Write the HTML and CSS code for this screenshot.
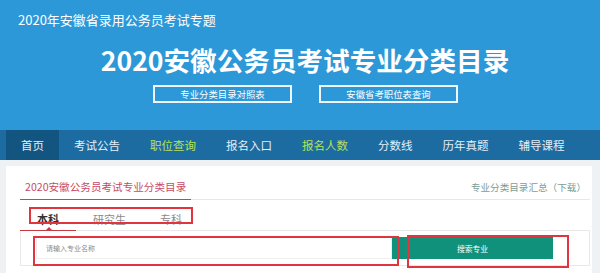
FILE: index.html
```html
<html>

<head>
  <meta charset="utf-8">
  <link rel="stylesheet" href="styles.css">
</head>

<body>
  <div id="banner">
    <div class="topic">2020年安徽省录用公务员考试专题</div>
    <h1>2020安徽公务员考试专业分类目录</h1>
    <div class="links">
      <a href="#">专业分类目录对照表</a>
      <a href="#">安徽省考职位表查询</a>
    </div>
  </div>
  <div id="nav">
    <a href="#" class="active">首页</a>
    <a href="#">考试公告</a>
    <a href="#" class="hot">职位查询</a>
    <a href="#">报名入口</a>
    <a href="#" class="hot">报名人数</a>
    <a href="#">分数线</a>
    <a href="#">历年真题</a>
    <a href="#">辅导课程</a>
  </div>
  <div id="card">
    <div class="card-head">
      <h2>2020安徽公务员考试专业分类目录</h2>
      <a href="#">专业分类目录汇总（下载）</a>
    </div>
    <div class="tabs">
      <span class="tab current">本科</span>
      <span class="tab">研究生</span>
      <span class="tab">专科</span>
    </div>
    <div class="search">
      <div class="field">请输入专业名称</div>
      <button>搜索专业</button>
    </div>
    <!-- marks drawn over the screenshot -->
    <div class="mark mark-tabs"></div>
    <div class="mark mark-input"></div>
    <div class="mark mark-btn"></div>
  </div>
</body>

</html>
```

FILE: styles.css
```css
body {
  margin: 0;
  padding: 0;
  background: #eff2f5;
  font-family: "Noto Sans CJK SC", "Noto Sans", sans-serif;
  overflow: hidden;
}

a {
  text-decoration: none;
}

#banner {
  background: #2d98d8;
  height: 130px;
  color: #fff;
  overflow: hidden;
}

#banner .topic {
  font-size: 13px;
  line-height: 16px;
  padding: 12px 0 0 18px;
}

#banner h1 {
  margin: 16px 0 0 0;
  padding-left: 10px;
  font-size: 26.6px;
  line-height: 32px;
  font-weight: bold;
  text-align: center;
}

#banner .links {
  display: flex;
  justify-content: center;
  gap: 27px;
  margin-top: 9px;
  padding-left: 11px;
}

#banner .links a {
  box-sizing: border-box;
  width: 139px;
  height: 18px;
  border: solid 2px #eef6fc;
  color: #fff;
  font-size: 9.4px;
  line-height: 14px;
  text-align: center;
}

#nav {
  display: flex;
  background: #1c6ca2;
  height: 30px;
  padding-left: 6px;
}

#nav a {
  padding: 0 15px;
  line-height: 30px;
  font-size: 11.5px;
  color: #e6eef5;
}

#nav a.active {
  background: #135581;
}

#nav a.hot {
  color: #b4e35a;
}

#card {
  position: relative;
  background: #fff;
  margin: 6px 8px 0 6px;
  padding: 0 2px 20px 14px;
}

.card-head {
  display: flex;
  justify-content: space-between;
  align-items: flex-end;
  border-bottom: solid 1px #e8e8e8;
}

.card-head h2 {
  margin: 0 0 -1px 0;
  padding: 9px 5px 0 5px;
  font-size: 10.6px;
  line-height: 24px;
  font-weight: normal;
  color: #c84a68;
  border-bottom: solid 1px #d0405a;
}

.card-head a {
  margin-right: 4px;
  font-size: 9.6px;
  line-height: 24px;
  color: #7d9c92;
}

.tabs {
  display: flex;
  position: relative;
  z-index: 1;
  padding-top: 8px;
  margin-bottom: -1px;
}

.tab {
  position: relative;
  padding: 0 17px;
  font-size: 11px;
  line-height: 22px;
  color: #8a8a8a;
  border-bottom: solid 1px transparent;
}

.tab.current {
  color: #333;
  font-weight: bold;
  border-bottom-color: #c63a44;
}

.tab.current:after {
  content: '';
  position: absolute;
  left: 26px;
  bottom: 0;
  border: solid 3px transparent;
  border-bottom-color: #c63a44;
}

.search {
  display: flex;
  border: solid 1px #e8e8e8;
  padding: 6px 0 6px 15px;
}

.search .field {
  box-sizing: border-box;
  width: 356px;
  height: 22px;
  border: solid 1px #eeeeee;
  padding-left: 9px;
  font-size: 7px;
  line-height: 20px;
  color: #8c8c8c;
}

.search button {
  width: 161px;
  height: 22px;
  border: none;
  background: #10917b;
  color: #fff;
  font-family: "Noto Sans CJK SC", sans-serif;
  font-size: 7.8px;
  padding: 0;
}

.mark {
  position: absolute;
  box-sizing: border-box;
  border: solid 2px #e0343e;
  z-index: 2;
}

.mark-tabs {
  left: 23px;
  top: 41px;
  width: 164px;
  height: 17px;
}

.mark-input {
  left: 27px;
  top: 70px;
  width: 366px;
  height: 30px;
}

.mark-btn {
  left: 401px;
  top: 69px;
  width: 162px;
  height: 33px;
}
```
